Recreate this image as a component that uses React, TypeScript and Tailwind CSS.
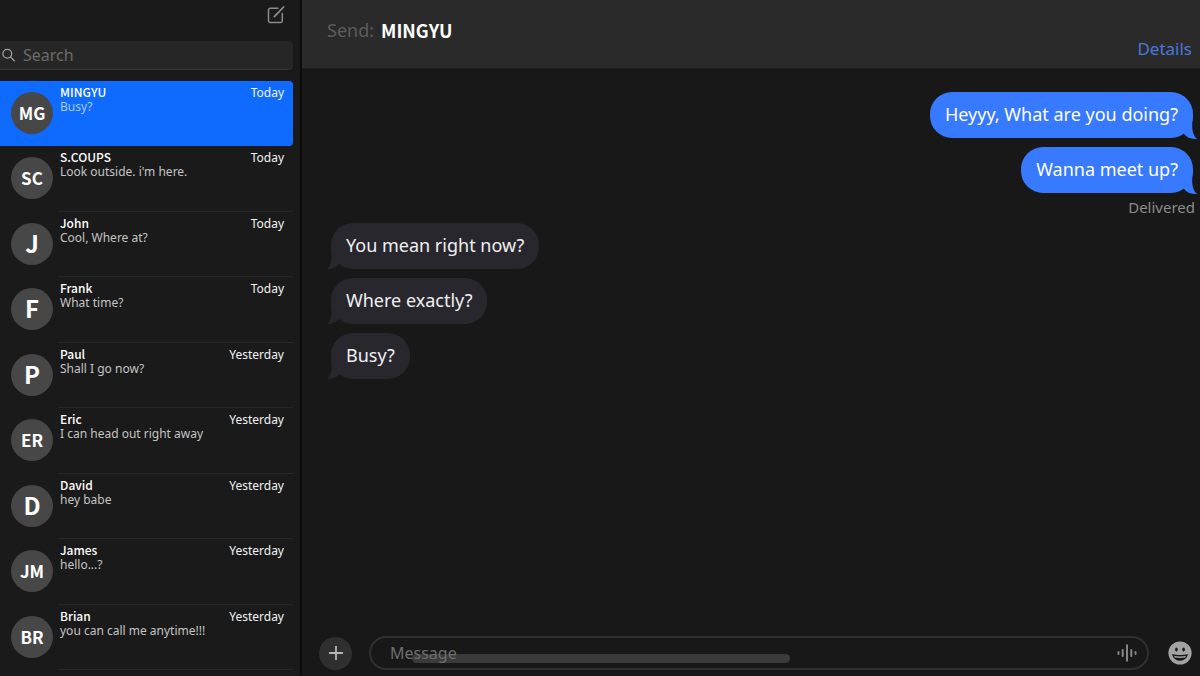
type Conversation = {
  initials: string;
  name: string;
  preview: string;
  when: string;
};

const conversations: Conversation[] = [
  { initials: "MG", name: "MINGYU", preview: "Busy?", when: "Today" },
  { initials: "SC", name: "S.COUPS", preview: "Look outside. i'm here.", when: "Today" },
  { initials: "J", name: "John", preview: "Cool, Where at?", when: "Today" },
  { initials: "F", name: "Frank", preview: "What time?", when: "Today" },
  { initials: "P", name: "Paul", preview: "Shall I go now?", when: "Yesterday" },
  { initials: "ER", name: "Eric", preview: "I can head out right away", when: "Yesterday" },
  { initials: "D", name: "David", preview: "hey babe", when: "Yesterday" },
  { initials: "JM", name: "James", preview: "hello...?", when: "Yesterday" },
  { initials: "BR", name: "Brian", preview: "you can call me anytime!!!", when: "Yesterday" },
];

const sent = ["Heyyy, What are you doing?", "Wanna meet up?"];
const received = ["You mean right now?", "Where exactly?", "Busy?"];

function ComposeIcon() {
  return (
    <svg width="18" height="18" viewBox="0 0 18 18" fill="none" stroke="#8c8c8c" strokeWidth="1.5" strokeLinecap="round">
      <path d="M11 2.2H3.2a1.7 1.7 0 0 0-1.7 1.7v10.9a1.7 1.7 0 0 0 1.7 1.7h10.4a1.7 1.7 0 0 0 1.7-1.7V7.5" />
      <path d="M7.4 10.6 16.6 1" strokeWidth="1.8" />
    </svg>
  );
}

function SearchIcon() {
  return (
    <svg width="14" height="14" viewBox="0 0 14 14" fill="none" stroke="#a0a0a0" strokeWidth="1.4" strokeLinecap="round">
      <circle cx="5.7" cy="5.7" r="4.7" />
      <path d="m9.3 9.3 3.9 3.9" />
    </svg>
  );
}

function PlusIcon() {
  return (
    <svg width="14" height="14" viewBox="0 0 14 14" stroke="#b4b4b4" strokeWidth="1.8">
      <path d="M7 0v14M0 7h14" />
    </svg>
  );
}

function WaveIcon() {
  return (
    <svg width="20" height="18" viewBox="0 0 20 18" stroke="#858585" strokeWidth="2" strokeLinecap="round">
      <path d="M1.5 8v2M5.7 6v6M10 1.2v15.6M14.3 6v6M18.5 8v2" />
    </svg>
  );
}

function SmileIcon() {
  return (
    <svg width="24" height="24" viewBox="0 0 24 24">
      <circle cx="12" cy="12" r="11.6" fill="#a3a3a3" />
      <ellipse cx="8.4" cy="8.6" rx="1.3" ry="2" fill="#181818" />
      <ellipse cx="15.6" cy="8.6" rx="1.3" ry="2" fill="#181818" />
      <path d="M4.2 13c2.4.8 5 1.1 7.8 1.1s5.4-.3 7.8-1.1c-.5 3.9-3.4 6.7-7.8 6.7S4.7 16.9 4.2 13Z" fill="#181818" />
      <path d="M6 14.7c1.9.5 3.9.7 6 .7s4.1-.2 6-.7c-.2.8-.5 1.3-.9 1.8-3.2.6-7 .6-10.2 0-.4-.5-.7-1-.9-1.8Z" fill="#a3a3a3" />
    </svg>
  );
}

function SentBubble({ text }: { text: string }) {
  return (
    <li className="relative flex h-[46px] items-center rounded-[22px] bg-[#3779ff] px-[15px] pb-[2px] text-white">
      <svg className="absolute -right-1 -bottom-px h-6 w-5" viewBox="0 0 20 24" fill="#3779ff">
        <path d="M16 0c-.3 5-1 8-.8 12 .2 5 1.6 9.3 4.8 12-5.5.3-10-1.4-12.5-4.5L0 8Z" />
      </svg>
      <span className="relative">{text}</span>
    </li>
  );
}

function ReceivedBubble({ text }: { text: string }) {
  return (
    <li className="relative flex h-[46px] items-center rounded-[22px] bg-[#28272d] px-[15px] pb-[2px] text-[#f0f0f2]">
      <svg className="absolute -left-1 bottom-0 h-6 w-5" viewBox="0 0 20 24" fill="#28272d">
        <path d="M4 0c0 5 .6 9 .5 13C4.3 18 3 21.3 0 24c5.5.3 9-1.6 12-4.5L20 8Z" />
      </svg>
      <span className="relative">{text}</span>
    </li>
  );
}

function ConversationRow({ item, active }: { item: Conversation; active: boolean }) {
  return (
    <li className="flex min-h-14 flex-1">
      <button
        type="button"
        className={
          active
            ? "flex w-full rounded-r-[4px] bg-[#0f6bff] pl-[11px] text-left"
            : "flex w-full pl-[11px] text-left"
        }
      >
        <span
          className={
            item.initials.length > 1
              ? "mt-[11px] flex size-[42px] shrink-0 items-center justify-center rounded-full bg-[#474747] font-['Noto_Sans_CJK_KR',sans-serif] text-[17px] leading-6 font-bold text-white"
              : "mt-[11px] flex size-[42px] shrink-0 items-center justify-center rounded-full bg-[#474747] pb-[2px] font-['Noto_Sans_CJK_KR',sans-serif] text-[24px] leading-6 font-bold text-white"
          }
        >
          {item.initials}
        </span>
        <span
          className={
            active
              ? "ml-[5px] flex flex-1 justify-between self-stretch pt-[5px] pr-[9px] pl-[2px]"
              : "ml-[5px] flex flex-1 justify-between self-stretch border-b border-[#262626] pt-[5px] pr-[9px] pl-[2px]"
          }
        >
          <span className="flex flex-col text-[12px]">
            <span className="font-['Noto_Sans_CJK_KR',sans-serif] leading-[12px] font-medium text-white">
              {item.name}
            </span>
            <span className={active ? "leading-[18px] text-[#a9c8ff]" : "leading-[18px] text-[#c4c4c4]"}>
              {item.preview}
            </span>
          </span>
          <span className="text-[12px] leading-[14px] text-[#f2f2f2]">{item.when}</span>
        </span>
      </button>
    </li>
  );
}

export default function App() {
  return (
    <div className="flex h-screen bg-[#181818] font-['Noto_Sans',sans-serif]">
      <aside className="flex w-[302px] shrink-0 flex-col border-r-2 border-[#0c0c0c] bg-[#1a1a1a] pr-[7px]">
        <div className="flex h-[41px] shrink-0 justify-end pt-[6px] pr-2">
          <button type="button" aria-label="New message" className="size-[18px]">
            <ComposeIcon />
          </button>
        </div>
        <label className="flex h-[29px] shrink-0 items-center gap-2 rounded-r-[5px] border-b border-[#3a3a3a] bg-[#262626] pl-[2px]">
          <SearchIcon />
          <input
            type="search"
            aria-label="Search"
            placeholder="Search"
            className="w-full min-w-0 bg-transparent text-[16px] leading-6 text-white outline-none placeholder:text-[#6a6a6a]"
          />
        </label>
        <ul className="mt-[11px] flex flex-1 flex-col pb-[6px]">
          {conversations.map((item, index) => (
            <ConversationRow key={item.name} item={item} active={index === 0} />
          ))}
        </ul>
      </aside>

      <main className="flex min-w-0 flex-1 flex-col">
        <header className="flex h-[69px] shrink-0 justify-between border-b border-[#1f1f1f] bg-[#2a2a2a] pr-2 pl-[25px]">
          <h1 className="flex gap-[7px] pt-[18px] leading-6">
            <span className="text-[18px] font-normal text-[#5c5c5c]">Send:</span>
            <span className="font-['Noto_Sans_CJK_KR',sans-serif] text-[18px] font-bold text-white">MINGYU</span>
          </h1>
          <a href="#details" className="self-end pb-[7px] text-[17px] leading-6 text-[#4a78dc]">
            Details
          </a>
        </header>

        <section className="flex flex-1 flex-col pt-[23px] pr-[7px] pl-[29px] text-[18px] leading-6">
          <ul className="flex flex-col items-end gap-[9px]">
            {sent.map((text) => (
              <SentBubble key={text} text={text} />
            ))}
          </ul>
          <p className="-mr-[2px] mt-[2px] mb-1 text-right text-[15px] leading-6 text-[#8c8c8c]">Delivered</p>
          <ul className="flex flex-col items-start gap-[9px]">
            {received.map((text) => (
              <ReceivedBubble key={text} text={text} />
            ))}
          </ul>
        </section>

        <footer className="flex shrink-0 items-center pr-2 pb-[6px] pl-[17px]">
          <button
            type="button"
            aria-label="Add attachment"
            className="flex size-[33px] items-center justify-center rounded-full bg-[#2f2f2f]"
          >
            <PlusIcon />
          </button>
          <div className="relative ml-[17px] flex h-[34px] flex-1 items-center rounded-full border-2 border-[#303030] pr-[10px] pl-[19px]">
            <span className="absolute bottom-[5px] left-[41px] h-[9px] w-[378px] rounded-full bg-[#3b3b3b]" />
            <input
              type="text"
              aria-label="Message"
              placeholder="Message"
              className="relative min-w-0 flex-1 bg-transparent text-[16px] leading-6 text-white outline-none placeholder:text-[#6e6e6e]"
            />
            <button type="button" aria-label="Record audio">
              <WaveIcon />
            </button>
          </div>
          <button type="button" aria-label="Emoji" className="ml-[19px]">
            <SmileIcon />
          </button>
        </footer>
      </main>
    </div>
  );
}
